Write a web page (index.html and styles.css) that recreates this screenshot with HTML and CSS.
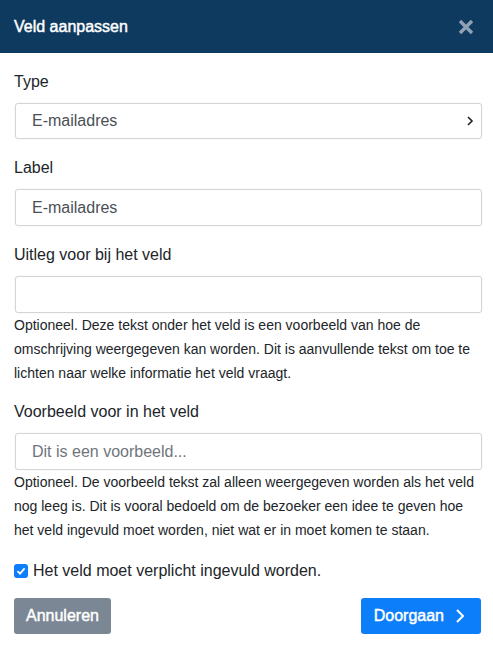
FILE: index.html
```html
<!DOCTYPE html>
<html>
<head>
    <title>Veld aanpassen</title>
    <link rel="stylesheet" href="styles.css">
</head>
<body>

<!-- Header -->
<div class="modal-header">
    <span class="modal-title">Veld aanpassen</span>
    <button class="close-button" aria-label="Sluiten">
        <svg width="16" height="16" viewBox="0 0 16 16"><path d="M2 2 L14 14 M14 2 L2 14" stroke="currentColor" stroke-width="3.4" stroke-linecap="butt"/></svg>
    </button>
</div>

<div class="modal-body">
    <div class="form-group">
        <label for="fieldType">Type</label>
        <div class="select-box" id="fieldType">
            <span>E-mailadres</span>
            <svg width="8" height="12" viewBox="0 0 8 12"><path d="M2 2 L6 6 L2 10" fill="none" stroke="#222" stroke-width="1.6"/></svg>
        </div>
    </div>

    <div class="form-group">
        <label for="fieldLabel">Label</label>
        <input type="text" id="fieldLabel" class="text-input" value="E-mailadres">
    </div>

    <div class="form-group">
        <label for="fieldHelp">Uitleg voor bij het veld</label>
        <input type="text" id="fieldHelp" class="text-input">
        <p class="help-text">Optioneel. Deze tekst onder het veld is een voorbeeld van hoe de omschrijving weergegeven kan worden. Dit is aanvullende tekst om toe te lichten naar welke informatie het veld vraagt.</p>
    </div>

    <div class="form-group">
        <label for="fieldPlaceholder">Voorbeeld voor in het veld</label>
        <input type="text" id="fieldPlaceholder" class="text-input" placeholder="Dit is een voorbeeld...">
        <p class="help-text">Optioneel. De voorbeeld tekst zal alleen weergegeven worden als het veld nog leeg is. Dit is vooral bedoeld om de bezoeker een idee te geven hoe het veld ingevuld moet worden, niet wat er in moet komen te staan.</p>
    </div>

    <div class="check-row">
        <span class="checkbox">
            <svg width="10" height="10" viewBox="0 0 10 10"><path d="M1.5 5.2 L4 7.6 L8.6 2.4" fill="none" stroke="#fff" stroke-width="1.8"/></svg>
        </span>
        <span>Het veld moet verplicht ingevuld worden.</span>
    </div>

    <div class="button-row">
        <button class="btn btn-cancel">Annuleren</button>
        <button class="btn btn-primary">Doorgaan
            <svg width="10" height="16" viewBox="0 0 10 16"><path d="M2 2 L8 8 L2 14" fill="none" stroke="#fff" stroke-width="2"/></svg>
        </button>
    </div>
</div>

</body>
</html>
```

FILE: styles.css
```css
body {
    margin: 0;
    font-family: "Liberation Sans", Arial, sans-serif;
    color: #212529;
    background: #fff;
}

.modal-header {
    height: 53px;
    background-color: #0f3a60;
    display: flex;
    align-items: center;
    justify-content: space-between;
    padding: 0 19px 0 14px;
}

.modal-title {
    color: #fff;
    font-size: 16px;
    -webkit-text-stroke: 0.45px #fff; /* medium weight look */
}

.close-button {
    background: none;
    border: none;
    padding: 0;
    color: #8fa2b5;
    display: flex;
    cursor: pointer;
}

.modal-body {
    padding: 17px 12px 0 14px;
}

.form-group {
    margin-bottom: 17px;
}

.form-group label {
    display: block;
    font-size: 16px;
    line-height: 24px;
    margin-bottom: 9px;
}

.select-box,
.text-input {
    box-sizing: border-box;
    width: 467px;
    height: 37px;
    margin-left: 1px;
    border: 1.5px solid #d5d5d5;
    border-radius: 3px;
    box-shadow: 0 0 2px rgba(0, 0, 0, 0.08);
    font-family: "Liberation Sans", Arial, sans-serif;
    font-size: 16px;
    color: #4a4f55;
    padding: 0 16px;
    background: #fff;
    display: block;
}

.select-box {
    height: 36px;
    display: flex;
    align-items: center;
    justify-content: space-between;
    padding-right: 7px;
}

.text-input::placeholder {
    color: #6f757b;
}

.help-text {
    margin: 0;
    font-size: 14px;
    line-height: 24px;
    color: #212529;
}

.form-group:nth-child(3) {
    margin-bottom: 15px;
}

.form-group:nth-child(4) {
    margin-bottom: 17px;
}

.check-row {
    display: flex;
    align-items: center;
    font-size: 16px;
    line-height: 24px;
    margin-bottom: 15px;
}

.checkbox {
    width: 14px;
    height: 14px;
    border-radius: 3px;
    background-color: #0d7ef9;
    display: flex;
    align-items: center;
    justify-content: center;
    margin-right: 5px;
}

.button-row {
    display: flex;
    justify-content: space-between;
}

.btn {
    height: 36px;
    border: none;
    border-radius: 3px;
    color: #fff;
    font-family: "Liberation Sans", Arial, sans-serif;
    font-size: 16px;
    -webkit-text-stroke: 0.45px #fff;
    padding: 0 12px;
    display: flex;
    align-items: center;
    cursor: pointer;
}

.btn-cancel {
    background-color: #7b8794;
}

.btn-primary {
    background-color: #0d7ef9;
    padding: 0 16px 0 13px;
    gap: 11px;
}
```
